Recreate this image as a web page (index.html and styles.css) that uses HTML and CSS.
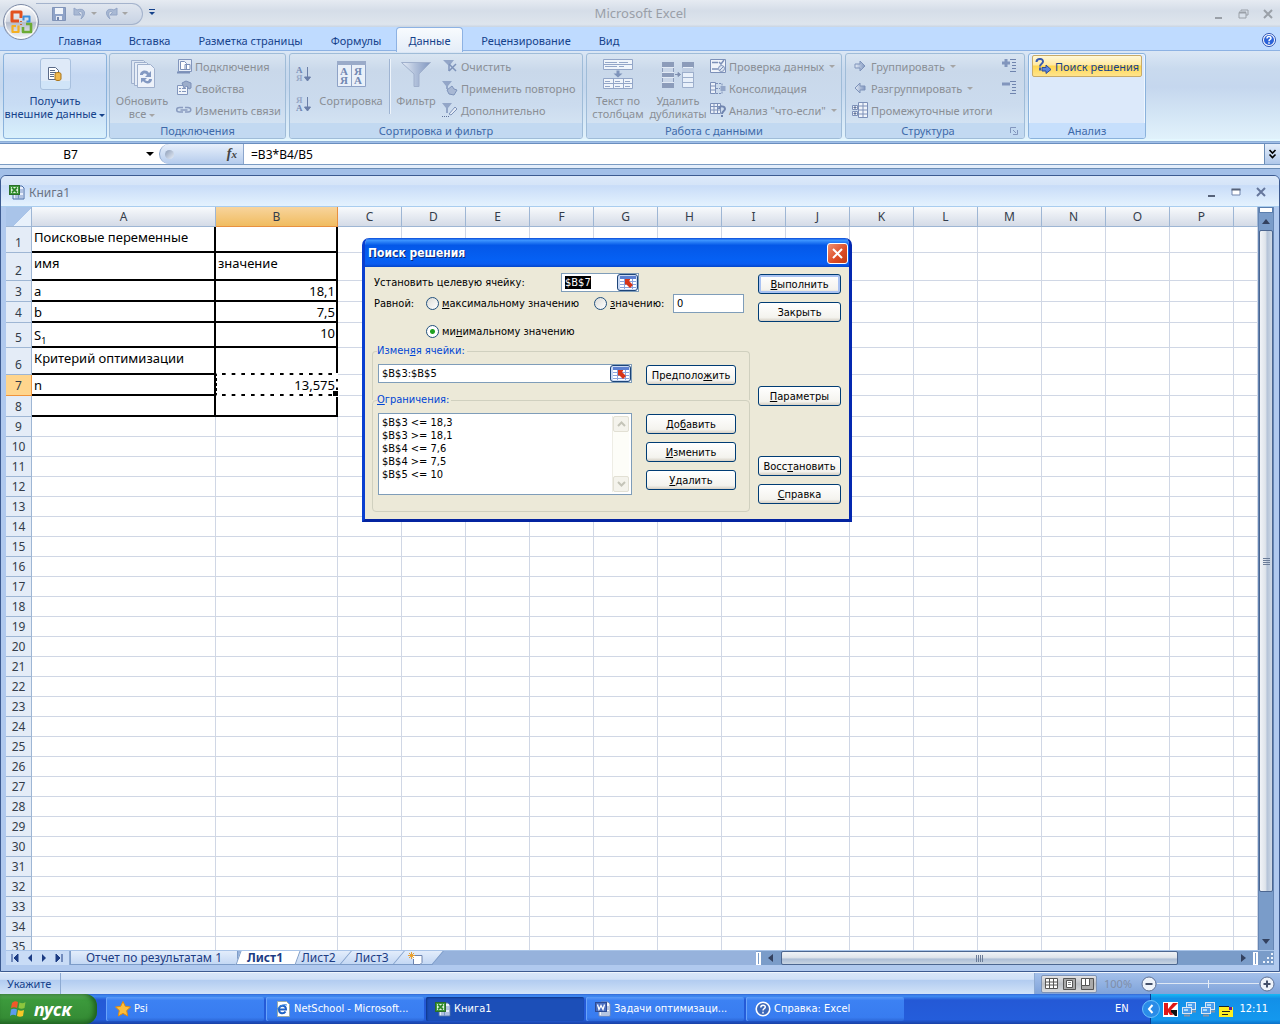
FILE: index.html
```html
<!DOCTYPE html>
<html lang="ru">
<head>
<meta charset="utf-8">
<title>Microsoft Excel - Книга1</title>
<link rel="stylesheet" href="styles.css">
</head>
<body>
<svg class="defs" aria-hidden="true">
  <defs>
    <linearGradient id="steel" x1="0" y1="0" x2="1" y2="0"><stop offset="0" stop-color="#e6edf7"/><stop offset=".45" stop-color="#b4c3dc"/><stop offset="1" stop-color="#8197c0"/></linearGradient>
    <linearGradient id="orb" x1="0" y1="0" x2="0" y2="1"><stop offset="0" stop-color="#fdfdfe"/><stop offset=".48" stop-color="#d3d8e2"/><stop offset=".52" stop-color="#b4bccc"/><stop offset="1" stop-color="#f8fafc"/></linearGradient>
    <symbol id="i-az" viewBox="0 0 16 18"><text x="1" y="8" class="ltr">А</text><text x="1" y="16" class="ltr pale">Я</text><path d="M12.500 2v13M9.500 12l3 4 3-4z" stroke="#6b7fa8" fill="#6b7fa8"/></symbol>
    <symbol id="i-za" viewBox="0 0 16 18"><text x="1" y="8" class="ltr pale">Я</text><text x="1" y="16" class="ltr">А</text><path d="M12.500 2v13M9.500 12l3 4 3-4z" stroke="#6b7fa8" fill="#6b7fa8"/></symbol>
    <symbol id="i-excel" viewBox="0 0 16 16"><path d="M6 2h7l2 2v11H4v-4" fill="#e8eefb" stroke="#4a6ea8"/><path d="M11 6h3M11 8h3M6 12h8M6 14h8M9.500 11v4" stroke="#7a96c8"/><rect x=".5" y="1.500" width="10" height="9" fill="#3f9a3c" stroke="#2a6e2a"/><path d="M2 3h7v6H2z" fill="#e4f2e0"/><path d="M3 3.500l5 5M8 3.500l-5 5" stroke="#2f8a2c" stroke-width="1.800"/></symbol>
    <symbol id="i-ref" viewBox="0 0 16 13"><rect width="16" height="13" fill="#fff"/><path d="M0 0h16v3H0z" fill="#5b7fd0"/><path d="M0 5.500h16M0 8.500h16M0 11.500h16M4.500 3v10M12.500 3v10" stroke="#8aa4dd"/><path d="M5 3h5v1l-1 1 4 4-3 3-4-4-1 1z" fill="#d83418"/></symbol>
    <symbol id="i-net" viewBox="0 0 16 16"><rect x="5.500" y="1.500" width="9" height="7" fill="#4a9cec" stroke="#dfe8f2"/><path d="M7 3h4v2H7z" fill="#a8dcff"/><rect x="1.500" y="6.500" width="9" height="6" fill="#4a9cec" stroke="#dfe8f2"/><path d="M3 8h4v2H3z" fill="#a8dcff"/><path d="M3 14.500h6M11 10.500h4" stroke="#8894a8" stroke-width="2"/></symbol>
  </defs>
</svg>

<header class="titlebar">
  <button class="office" aria-label="Кнопка Office">
    <svg viewBox="0 0 38 38" width="38" height="38"><circle cx="19" cy="19" r="17.500" fill="url(#orb)" stroke="#7c8aa6"/><circle cx="19" cy="19" r="16" fill="none" stroke="#fff"/>
      <g fill="none" stroke-linejoin="round"><path d="M17 18h-7V9h9v6" stroke="#e2501e" stroke-width="3"/><path d="M21.500 17.500v-4h6v5h-3" stroke="#3a8edc" stroke-width="2"/><path d="M16.500 22.500V29H10.500v-6h3.500" stroke="#f4b024" stroke-width="2.200"/><path d="M21 24v5h8v-8h-5" stroke="#6cab34" stroke-width="2.600"/><path d="M18 18.500h2M18 21.500h2" stroke="#c86a3a"/></g></svg>
  </button>
  <div class="qat">
    <button aria-label="Сохранить"><svg viewBox="0 0 14 14" width="14" height="14"><path d="M.5.500h13v13H.5z" fill="#8fa3c8" stroke="#8194b8"/><path d="M3 1h8v6H3z" fill="#f0f4fa"/><path d="M4 9h6v4H4z" fill="#e6ebf5"/><path d="M5 10h2v3H5z" fill="#7285ac"/></svg></button>
    <button aria-label="Отменить"><svg viewBox="0 0 14 14" width="14" height="14"><path d="M1 1v7h7L5.500 5.500C8 3 11 5 8 12c6-5 4-12-4-9z" fill="#a9b9d4" stroke="#93a5c6"/></svg></button>
    <span class="tri"></span>
    <button aria-label="Вернуть"><svg viewBox="0 0 14 14" width="14" height="14"><path d="M13 1v7H6l2.500-2.500C6 3 3 5 6 12-0 7 2 0 10 3z" fill="#a9b9d4" stroke="#93a5c6"/></svg></button>
    <span class="tri"></span>
  </div>
  <button class="qat-more" aria-label="Настройка панели"><span class="tri navy bar"></span></button>
  <h1>Microsoft Excel</h1>
  <div class="winbtns">
    <button aria-label="Свернуть"><svg viewBox="0 0 12 12" width="12" height="12"><path d="M3 9h7v2H3z" fill="#9aa0a8"/></svg></button>
    <button aria-label="Восстановить"><svg viewBox="0 0 12 12" width="12" height="12"><path d="M4 3V2h7v5H9M2 4.500h7V10H2z" fill="none" stroke="#9aa0a8"/><path d="M2 4.500h7" stroke="#9aa0a8" stroke-width="2"/></svg></button>
    <button aria-label="Закрыть"><svg viewBox="0 0 12 12" width="12" height="12"><path d="M2 2l8 8M10 2l-8 8" stroke="#9aa0a8" stroke-width="2"/></svg></button>
  </div>
</header>

<nav class="tabs">
  <button class="t1">Главная</button><button class="t2">Вставка</button><button class="t3">Разметка страницы</button><button class="t4">Формулы</button><button class="t5 active">Данные</button><button class="t6">Рецензирование</button><button class="t7">Вид</button>
  <button class="help" aria-label="Справка"><svg viewBox="0 0 14 14" width="14" height="14"><circle cx="7" cy="7" r="6.500" fill="#fff" stroke="#2a50b0"/><circle cx="7" cy="7" r="5" fill="#2a62d8"/><path d="M5 5.500C5 3 9 3 9 5.200 9 6.500 7 6.500 7 8.200M7 9.300v1.500" fill="none" stroke="#fff" stroke-width="1.500"/></svg></button>
</nav>

<section class="ribbon">
  <div class="group hot g1">
    <div class="items">
      <button class="big"><span class="frame"><svg viewBox="0 0 16 16" width="16" height="16"><path d="M1.500 1.500h7l3 3v9h-10z" fill="#fff" stroke="#5a6a88"/><path d="M3 4.500h5M3 6.500h6M3 8.500h4M3 10.500h4" stroke="#5a6a88"/><path d="M8 8c0-2 6-2 6 0v5c0 2-6 2-6 0z" fill="#f0b84c" stroke="#a8741c"/></svg></span><span>Получить<br>внешние данные <i class="tri navy"></i></span></button>
    </div>
  </div>
  <div class="group g2">
    <div class="items">
      <button class="big"><svg viewBox="0 0 32 32" width="32" height="32"><path d="M5.500 2.500h12l3 3v20h-15z" fill="#dde6f3" stroke="#9fb0cd"/><path d="M8.500 4.500h12l3 3v20h-15z" fill="#e6edf7" stroke="#9fb0cd"/><path d="M11.500 6.500h13l4 4v19h-17z" fill="#edf2fa" stroke="#9fb0cd"/><path d="M14 17c0-5 7-6 9-2l2-2v6h-6l2-2c-1-2-4-2-4 0zM26 21c0 5-6 6-9 2l-2 2v-5h6l-2 2c2 2 4 1 4-1z" fill="#8399c2"/></svg><span>Обновить<br>все <i class="tri"></i></span></button>
      <div class="rows">
        <button><svg viewBox="0 0 16 16" width="16" height="16"><path d="M2.500 1.500h13v12h-13z" fill="#e8eef8" stroke="#8296bd"/><path d="M4.500 3.500h4l2 2v6h-6zM9 6.500h5v5H9z" fill="#fff" stroke="#7c90b8"/><path d="M1 14.500h13" stroke="#7c90b8" stroke-width="2"/></svg>Подключения</button>
        <button><svg viewBox="0 0 16 16" width="16" height="16"><path d="M1.500 5.500h10v9h-10z" fill="#f0f4fa" stroke="#8296bd"/><path d="M3 8.500h2M3 11.500h2M6 8.500h4M6 11.500h4" stroke="#8296bd"/><path d="M6 3l4-2 5 2v5l-2 1-2-3-3 2z" fill="#9cadca" stroke="#7c90b8"/></svg>Свойства</button>
        <button><svg viewBox="0 0 16 16" width="16" height="16"><path d="M7 10H3.500a2.500 2 0 010-4.500H7M9 5.500h3a2.500 2 0 010 4.500H9M4.500 8h7" fill="none" stroke="#8a9cc0" stroke-width="1.500"/></svg>Изменить связи</button>
      </div>
    </div>
    <h2>Подключения</h2>
  </div>
  <div class="group g3">
    <div class="items">
      <div class="pair"><button aria-label="По возрастанию"><svg width="16" height="18"><use href="#i-az"/></svg></button><button aria-label="По убыванию"><svg width="16" height="18"><use href="#i-za"/></svg></button></div>
      <button class="big"><svg viewBox="0 0 32 32" width="32" height="32"><path d="M2.500 3.500h28v25h-28z" fill="#e9f0f9" stroke="#8ea2c6"/><path d="M2 3h29v4H2z" fill="#9aabc9"/><path d="M16.500 7v21" stroke="#8ea2c6"/><g class="ltr big-ltr"><text x="5" y="17">А</text><text x="5" y="26">Я</text><text x="19" y="17">Я</text><text x="19" y="26">А</text></g></svg><span>Сортировка</span></button>
      <span class="sep"></span>
      <button class="big filter"><svg viewBox="0 0 32 32" width="32" height="32"><path d="M1.500 4.500h29L19 16v12.500h-5V16z" fill="url(#steel)" stroke="#a0b0cc"/></svg><span>Фильтр</span></button>
      <div class="rows">
        <button><svg viewBox="0 0 16 16" width="16" height="16"><path d="M1 2h11L8 7v6H6V7z" fill="#93a6c8"/><path d="M7 6l7 7M14 6l-7 7" stroke="#7e93ba" stroke-width="1.500"/></svg>Очистить</button>
        <button><svg viewBox="0 0 16 16" width="16" height="16"><path d="M0 1h10L6 6v3H4V6z" fill="#93a6c8"/><path d="M5 10l5-4 2 3 3 1-3 5-5-1z" fill="#a8b8d4" stroke="#7e93ba"/></svg>Применить повторно</button>
        <button><svg viewBox="0 0 16 16" width="16" height="16"><path d="M0 1h10L6 6v5H4V6z" fill="#93a6c8"/><path d="M7 12l6-7 2 2-6 6z" fill="#e4ebf6" stroke="#7e93ba"/><path d="M0 14.500h8" stroke="#5f739a" stroke-dasharray="1 1"/></svg>Дополнительно</button>
      </div>
    </div>
    <h2>Сортировка и фильтр</h2>
  </div>
  <div class="group g4">
    <div class="items">
      <button class="big"><svg viewBox="0 0 32 32" width="32" height="32"><path d="M1.500 1.500h29v10h-29z" fill="#f0f5fb" stroke="#93a6c8"/><path d="M3 4.500h12M17 4.500h9M3 8.500h12M17 8.500h5M1 6.500h30" stroke="#93a6c8"/><path d="M14.500 12.500h3v3h3l-4.500 4-4.500-4h3z" fill="#7e93ba"/><path d="M1.500 20.500h29v10h-29z" fill="#f0f5fb" stroke="#93a6c8"/><path d="M1 25.500h30M11.500 20v11M21.500 20v11M3 23.500h5M13 23.500h5M23 23.500h5M3 28.500h5M13 28.500h5M23 28.500h5" stroke="#93a6c8"/></svg><span>Текст по<br>столбцам</span></button>
      <button class="big"><svg viewBox="0 0 34 32" width="34" height="32"><path d="M1 4h12v26H1z" fill="#8c9cba"/><path d="M2 10h10v4H2zM2 20h10v4H2z" fill="#c9d6e8"/><path d="M1 9.500h12M1 14.500h12M1 19.500h12M1 24.500h12" stroke="#e2eaf5"/><path d="M14 16.500h5M17 14.500l2.500 2-2.500 2z" stroke="#7f8fb0" fill="#7f8fb0"/><path d="M21.500 4.500h11v25h-11z" fill="#e8f0fa" stroke="#9dafcc"/><path d="M21 4h12v5H21z" fill="#8c9cba"/><path d="M21 10h12v4H21z" fill="#c0cee2"/><path d="M21 14.500h12M21 19.500h12M21 24.500h12" stroke="#9dafcc"/></svg><span>Удалить<br>дубликаты</span></button>
      <div class="rows">
        <button><svg viewBox="0 0 16 16" width="16" height="16"><path d="M.5 1.500h15v13H.5z" fill="#f0f4fa" stroke="#7c90b8"/><path d="M2 4.500h6M2 11h6M9 4l2 2 3-4" fill="none" stroke="#7c90b8" stroke-width="1.500"/><circle cx="11.500" cy="10.500" r="3" fill="#dbe4f2" stroke="#7c90b8"/><path d="M9.500 12.500l4-4" stroke="#7c90b8"/></svg>Проверка данных <i class="tri"></i></button>
        <button><svg viewBox="0 0 16 16" width="16" height="16"><path d="M.5 2.500h5v11h-5zM.5 6h5M.5 10h5" fill="#eaf0f9" stroke="#7c90b8"/><path d="M10.500 6h5v5h-5z" fill="#93a6c8"/><path d="M6 3.500h6v2M6 13.500h6v-2M6 8.500h4" fill="none" stroke="#7c90b8" stroke-dasharray="2 1"/></svg>Консолидация</button>
        <button><svg viewBox="0 0 16 16" width="16" height="16"><path d="M.5 1.500h10v10H.5zM.5 4.500h10M.5 8h10M4 1.500v10M7.500 1.500v10" fill="#eaf0f9" stroke="#7c90b8"/><path d="M9 7c0-4 6-3 6 0 0 2-3 2-3 5M12 13v2" fill="none" stroke="#7085b0" stroke-width="2"/></svg>Анализ "что-если" <i class="tri"></i></button>
      </div>
    </div>
    <h2>Работа с данными</h2>
  </div>
  <div class="group g5">
    <div class="items">
      <div class="rows">
        <button><svg viewBox="0 0 16 16" width="16" height="16"><path d="M3 6h5V3l5 5-5 5v-3H3z" fill="url(#steel)" stroke="#7e93ba"/></svg>Группировать <i class="tri"></i></button>
        <button><svg viewBox="0 0 16 16" width="16" height="16"><path d="M13 6H8V3L3 8l5 5v-3h5z" fill="url(#steel)" stroke="#7e93ba"/></svg>Разгруппировать <i class="tri"></i></button>
        <button><svg viewBox="0 0 16 16" width="16" height="16"><path d="M.5 3.500h5v4h-5zM.5 9.500h5v4h-5zM6.500.500h9v15h-9zM6.500 4h9M6.500 8h9M6.500 12h9M11 .500v15" fill="#f0f4fa" stroke="#7c90b8"/><path d="M1.500 5.500h3M3 4v3M1.500 11.500h3M3 10v3" stroke="#5f739a"/></svg>Промежуточные итоги</button>
      </div>
      <div class="rows outline">
        <button aria-label="Отобразить детали"><svg viewBox="0 0 16 16" width="16" height="16"><path d="M1 5h8M5 1v8" stroke="#8296bd" stroke-width="3"/><path d="M9 1.500h6M11 4.500h4M11 7.500h4M11 10.500h4M9 13.500h6" stroke="#6f84ae"/></svg></button>
        <button aria-label="Скрыть детали"><svg viewBox="0 0 16 16" width="16" height="16"><path d="M1 4h8" stroke="#8296bd" stroke-width="3"/><path d="M9 1.500h6M11 4.500h4M11 7.500h4M11 10.500h4M9 13.500h6" stroke="#6f84ae"/></svg></button>
      </div>
    </div>
    <h2><span>Структура</span><svg viewBox="0 0 8 8" width="8" height="8"><path d="M.5 6V.500H6M3 3l3 3M7.500 3v4.500H3" fill="none" stroke="#8296bd"/></svg></h2>
  </div>
  <div class="group hot g6">
    <div class="items">
      <button class="solver"><svg viewBox="0 0 16 16" width="16" height="16"><path d="M1.500 4C1.500 0 8 0 8 3.500 8 6 5 5.500 5 8.500M5 9.500v3" fill="none" stroke="#3a5cae" stroke-width="2"/><path d="M7 9.500h4V7l5 4.500-5 4V13H7z" fill="#5b86dc" stroke="#2c4c9c"/></svg>Поиск решения</button>
    </div>
    <h2>Анализ</h2>
  </div>
</section>

<div class="formula">
  <div class="namebox"><input value="B7" aria-label="Имя"><button aria-label="Список имён"><i class="tri black"></i></button></div>
  <div class="fx"><span class="knob"></span><button aria-label="Вставить функцию"><em>f</em><small>x</small></button></div>
  <input class="expr" value="=B3*B4/B5" aria-label="Строка формул">
  <button class="expand" aria-label="Развернуть"><svg viewBox="0 0 9 10" width="9" height="10"><path d="M1.500 1l3 3 3-3M1.500 5.500l3 3 3-3" fill="none" stroke="#000" stroke-width="1.600"/></svg></button>
</div>

<main class="workspace">
  <section class="book">
    <div class="book-title">
      <svg width="16" height="16"><use href="#i-excel"/></svg><h2>Книга1</h2>
      <div class="winbtns dark">
        <button aria-label="Свернуть окно"><svg viewBox="0 0 12 12" width="12" height="12"><path d="M3 9h7v2H3z" fill="#566279"/></svg></button>
        <button aria-label="Развернуть окно"><svg viewBox="0 0 12 12" width="12" height="12"><path d="M2 3.500h8V9H2z" fill="#fff" stroke="#7185ac"/><path d="M1.500 3.500h9" stroke="#566279" stroke-width="2"/></svg></button>
        <button aria-label="Закрыть окно"><svg viewBox="0 0 12 12" width="12" height="12"><path d="M2 2l8 8M10 2l-8 8" stroke="#66779c" stroke-width="2"/></svg></button>
      </div>
    </div>
    <div class="sheet-area">
      <div class="sheet"><table id="grid"></table></div>
      <div class="vscroll">
        <span class="splitter"></span><button class="up" aria-label="Вверх"></button>
        <span class="vthumb"><i></i></span>
        <button class="down" aria-label="Вниз"></button>
      </div>
    </div>
    <div class="sheet-tabs">
      <div class="navs">
        <button aria-label="Первый лист"><svg viewBox="0 0 8 8" width="8" height="8"><path d="M1 0v8M7 0L3 4l4 4z" stroke="#1c3c84" fill="#1c3c84"/></svg></button>
        <button aria-label="Предыдущий лист"><svg viewBox="0 0 8 8" width="8" height="8"><path d="M6 0L2 4l4 4z" fill="#1c3c84"/></svg></button>
        <button aria-label="Следующий лист"><svg viewBox="0 0 8 8" width="8" height="8"><path d="M2 0l4 4-4 4z" fill="#1c3c84"/></svg></button>
        <button aria-label="Последний лист"><svg viewBox="0 0 8 8" width="8" height="8"><path d="M7 0v8M1 0l4 4-4 4z" stroke="#1c3c84" fill="#1c3c84"/></svg></button>
      </div>
      <button class="stab report"><span>Отчет по результатам 1</span></button>
      <button class="stab current"><span>Лист1</span></button>
      <button class="stab"><span>Лист2</span></button>
      <button class="stab"><span>Лист3</span></button>
      <button class="stab add" aria-label="Вставить лист"><span><svg viewBox="0 0 15 13" width="15" height="13"><path d="M4 3.500h10v7l-2 2H5.500V7" fill="#fff" stroke="#6b82ae"/><path d="M3.500 0v7M0 3.500h7M1 1l5 5M6 1L1 6" stroke="#e8a030"/></svg></span></button>
      <div class="hscroll">
        <span class="hsplit"></span><button class="left" aria-label="Влево"></button>
        <span class="hthumb"><i></i></span><span class="htrack"></span>
        <button class="right" aria-label="Вправо"></button><span class="hsplit"></span>
        <svg class="grip" viewBox="0 0 12 12" width="12" height="12"><path d="M10 1v2M6 5v2M10 5v2M2 9v2M6 9v2M10 9v2" stroke="#eef4fc" stroke-width="2"/></svg>
      </div>
    </div>
  </section>
</main>

<footer class="status">
  <span class="mode">Укажите</span>
  <div class="views">
    <button aria-label="Обычный"><svg viewBox="0 0 13 11" width="13" height="11"><path d="M.5.500h12v10H.5zM.5 4h12M.5 7h12M4.500.500v10M8.500.500v10" fill="#fff" stroke="#555"/></svg></button>
    <button aria-label="Разметка страницы"><svg viewBox="0 0 13 12" width="13" height="12"><path d="M.5.500h12v11H.5z" fill="#aaa" stroke="#555"/><path d="M3.500 2.500h6v7h-6z" fill="#fff" stroke="#555"/><path d="M5 4.500h3M5 6.500h3" stroke="#888"/></svg></button>
    <button aria-label="Страничный режим"><svg viewBox="0 0 13 12" width="13" height="12"><path d="M.5.500h12v11H.5z" fill="#aaa" stroke="#555"/><path d="M.5.500h4v7h-4zM4.500.500h4v7h-4z" fill="#fff" stroke="#555"/></svg></button>
  </div>
  <span class="zoom">100%</span>
  <button class="round" aria-label="Уменьшить"><svg viewBox="0 0 16 16" width="16" height="16"><circle cx="8" cy="8" r="7" fill="#eef3fa" stroke="#5c6f94"/><path d="M4.500 8h7" stroke="#44506a" stroke-width="2"/></svg></button>
  <span class="slide"></span>
  <button class="round" aria-label="Увеличить"><svg viewBox="0 0 16 16" width="16" height="16"><circle cx="8" cy="8" r="7" fill="#eef3fa" stroke="#5c6f94"/><path d="M4.500 8h7M8 4.500v7" stroke="#44506a" stroke-width="2"/></svg></button>
</footer>

<div class="taskbar">
  <button class="start"><svg viewBox="0 0 18 18" width="18" height="18"><path d="M2 3c2-2 4-2 6-1L7 8C5 7 3 7 1 8z" fill="#f0582a"/><path d="M9.500 2.500c2 1 4 1 6-.500L14.500 8c-2 1-4 1-6 0z" fill="#8cc63e"/><path d="M1 9.500c2-1 4-1 6 0l-1 6c-2-1-4-1-6 .500z" fill="#5c9cf0"/><path d="M8 10c2 1 4 1 6 0l-1 6c-2 1-4 1-6 0z" fill="#f8c828"/></svg>пуск</button>
  <div class="tasks">
    <button><svg viewBox="0 0 16 16" width="16" height="16"><path d="M8 .500l2.300 4.800 5.200.700-3.800 3.600 1 5.400L8 12.400 3.300 15l1-5.400L.5 6l5.200-.700z" fill="#fdbe3c" stroke="#e08a10"/></svg><span>Psi</span></button>
    <button><svg viewBox="0 0 16 16" width="16" height="16"><path d="M2.500.500h9l3 3v12h-12z" fill="#fff" stroke="#9aa"/><path d="M3 8.500h8c0-5-7-5-7 0s5 4.500 6.500 2" fill="none" stroke="#1e62c8" stroke-width="2"/><path d="M1 13C-1 9 7 2 12 4" fill="none" stroke="#3a88e0"/></svg><span>NetSchool - Microsoft...</span></button>
    <button class="on"><svg width="16" height="16"><use href="#i-excel"/></svg><span>Книга1</span></button>
    <button><svg viewBox="0 0 16 16" width="16" height="16"><path d="M6 1h7l2 2v12H4v-4" fill="#f2f5fc" stroke="#7a8cb4"/><path d="M11 6h3M11 8h3M6 11h8M6 13h8" stroke="#7a96c8"/><rect x=".5" y="1.500" width="11" height="9" fill="#4a6ec0" stroke="#2c4a94"/><path d="M2.500 3.500l1.500 5 2-4 2 4 1.500-5" fill="none" stroke="#fff" stroke-width="1.300"/></svg><span>Задачи оптимизаци...</span></button>
    <button><svg viewBox="0 0 16 16" width="16" height="16"><circle cx="8" cy="8" r="6.800" fill="#3d68b8" stroke="#fff" stroke-width="1.600"/><path d="M5.800 6.500c0-3 4.500-3 4.500-.400C10.300 7.800 8 7.600 8 9.500M8 10.800v1.600" fill="none" stroke="#fff" stroke-width="1.500"/></svg><span>Справка: Excel</span></button>
  </div>
  <span class="lang">EN</span>
  <div class="tray">
    <button class="chev" aria-label="Показать значки"><svg viewBox="0 0 18 18" width="18" height="18"><circle cx="9" cy="9" r="8.500" fill="#2a8ce8" stroke="#6cc0fa"/><path d="M10.500 5L7 9l3.500 4" fill="none" stroke="#fff" stroke-width="2"/></svg></button>
    <svg viewBox="0 0 15 15" width="15" height="15"><path d="M0 0h15v15H0z" fill="#fff"/><path d="M1 1h4v6l5-6h5L8 8l2 5H7L5 10v3H1z" fill="#e01818"/><path d="M8 8h6v6h-2l-4-4z" fill="#111"/></svg>
    <svg width="16" height="16"><use href="#i-net"/></svg>
    <svg width="16" height="16"><use href="#i-net"/></svg>
    <svg viewBox="0 0 14 16" width="14" height="16"><path d="M0 6h14v10H0z" fill="#ffee20"/><path d="M0 5.500h10" stroke="#222"/><path d="M3 10.500h8M3 13.500h6" stroke="#222"/><path d="M10 6h3v3h-3z" fill="#6a1c90"/></svg>
    <time>12:11</time>
  </div>
</div>

<form class="dialog" role="dialog" aria-labelledby="dlg-title">
  <div class="dlg-bar"><h2 id="dlg-title">Поиск решения</h2><button type="button" class="dlg-close" aria-label="Закрыть"><svg viewBox="0 0 13 13" width="13" height="13"><path d="M2 2l9 9M11 2l-9 9" stroke="#fff" stroke-width="2"/></svg></button></div>
  <div class="dlg-body">
    <div class="dlg-main">
      <div class="target"><label for="target">Установить целевую ячейку:</label><span class="ref"><input id="target" value="$B$7"><button type="button" aria-label="Выбрать"><svg width="16" height="13"><use href="#i-ref"/></svg></button></span></div>
      <div class="equal">
        <span>Равной:</span>
        <label><input type="radio" name="goal"><span><u>м</u>аксимальному значению</span></label>
        <label><input type="radio" name="goal"><span><u>з</u>начению:</span></label>
        <input class="val" value="0" aria-label="Значение">
        <label class="min"><input type="radio" name="goal" checked><span>ми<u>н</u>имальному значению</span></label>
      </div>
      <fieldset class="fs1">
        <legend>Измен<u>я</u>я ячейки:</legend>
        <div class="cols"><span class="ref wide"><input value="$B$3:$B$5" aria-label="Изменяя ячейки"><button type="button" aria-label="Выбрать"><svg width="16" height="13"><use href="#i-ref"/></svg></button></span><button type="button" class="xp">Предполо<u>ж</u>ить</button></div>
      </fieldset>
      <fieldset class="fs2">
        <legend><u>О</u>граничения:</legend>
        <div class="cols">
          <div class="list"><select size="6" aria-label="Ограничения"><option>$B$3 &lt;= 18,3</option><option>$B$3 &gt;= 18,1</option><option>$B$4 &lt;= 7,6</option><option>$B$4 &gt;= 7,5</option><option>$B$5 &lt;= 10</option></select>
            <div class="lscroll"><span><svg viewBox="0 0 9 6" width="9" height="6"><path d="M1 5l3.500-3.500L8 5" fill="none" stroke="#c4c4b8" stroke-width="2"/></svg></span><span><svg viewBox="0 0 9 6" width="9" height="6"><path d="M1 1l3.500 3.500L8 1" fill="none" stroke="#c4c4b8" stroke-width="2"/></svg></span></div></div>
          <div class="stack"><button type="button" class="xp">До<u>б</u>авить</button><button type="button" class="xp"><u>И</u>зменить</button><button type="button" class="xp"><u>У</u>далить</button></div>
        </div>
      </fieldset>
    </div>
    <div class="dlg-side">
      <button type="button" class="xp default"><u>В</u>ыполнить</button>
      <button type="button" class="xp">Закрыть</button>
      <button type="button" class="xp params"><u>П</u>араметры</button>
      <button type="button" class="xp reset">Восс<u>т</u>ановить</button>
      <button type="button" class="xp"><u>С</u>правка</button>
    </div>
  </div>
</form>
<script src="script.js"></script>
</body>
</html>
```
FILE: script.js
```js
const cells = {
  A1: 'Поисковые переменные', A2: 'имя', B2: 'значение',
  A3: 'a', B3: '18,1', A4: 'b', B4: '7,5',
  A5: 'S<sub>1</sub>', B5: '10', A6: 'Критерий оптимизации',
  A7: 'n', B7: '13,575'
};
const columns = [...'ABCDEFGHIJKLMNOP', ''];
const lastRow = 35;
const framedRows = 8;

let html = '<colgroup><col class="c-head"><col class="c-a"><col class="c-b">' +
  '<col class="c-std">'.repeat(14) + '<col></colgroup><thead><tr><th class="corner"></th>';
for (const c of columns) {
  html += `<th class="${c === 'B' ? 'sel' : ''}">${c}</th>`;
}
html += '</tr></thead><tbody>';
for (let r = 1; r <= lastRow; r++) {
  html += `<tr class="r${r}"><th class="${r === 7 ? 'sel' : ''}">${r}</th>`;
  for (const c of columns) {
    const text = cells[c + r] || '';
    const cls = [];
    if (r <= framedRows && (c === 'A' || c === 'B')) cls.push('framed');
    if (/^[0-9]/.test(text)) cls.push('num');
    if (c + r === 'B7') cls.push('marching');
    html += `<td class="${cls.join(' ')}">${text}</td>`;
  }
  html += '</tr>';
}
document.getElementById('grid').innerHTML = html + '</tbody>';

const target = document.getElementById('target');
target.focus();
target.select();
```
FILE: styles.css
```css
* { box-sizing: border-box; }
body {
  margin: 0; height: 100vh; display: flex; flex-direction: column; overflow: hidden;
  font: 11px/13px "Noto Sans", "Open Sans", sans-serif; color: #15428b; background: #a2bfe8;
}
button, input, select { font: inherit; color: inherit; margin: 0; padding: 0; border: 0; background: none; outline: none; }
h1, h2 { margin: 0; font: inherit; }
svg { display: block; flex: none; }
.defs { position: absolute; width: 0; height: 0; }
.tri { display: inline-block; border: 3px solid transparent; border-top-color: #a5a5a5; border-bottom: 0; vertical-align: middle; }
.tri.navy { border-top-color: #15428b; }
.tri.black { border-width: 4px; border-bottom: 0; border-top-color: #000; }
.ltr { font: bold 9px "Liberation Serif", serif; fill: #7187b2; }
.ltr.pale { fill: #98a8c6; }
.big-ltr { font-size: 11px; }

/* title bar */
.titlebar { position: relative; flex: none; height: 27px; display: flex; align-items: center; background: linear-gradient(#e6ebf2, #d5dde8 40%, #dee5ed 90%, #c9d4e2); }
.office { position: absolute; left: 2px; top: 3px; z-index: 3; }
.qat { display: flex; align-items: center; gap: 7px; height: 22px; margin-left: 36px; width: 107px; padding-left: 16px; border: 1px solid #a4b3cc; border-left: 0; border-radius: 0 11px 11px 0; background: linear-gradient(#e0e6ef, #c8d3e4); }
.qat .tri { margin-left: -3px; }
.qat-more { margin-left: 6px; line-height: 0; }
.tri.bar { border-top-color: #15428b; position: relative; }
.tri.bar::before { content: ""; position: absolute; left: -3px; top: -6px; width: 6px; height: 1px; background: #15428b; }
.titlebar h1 { flex: 1; text-align: center; color: #9a9fa8; padding-right: 86px; font-size: 13px; }
.winbtns { display: flex; gap: 13px; padding-right: 6px; }

/* ribbon tabs */
.tabs { position: relative; flex: none; height: 24px; display: flex; padding-left: 45px; background: #bfdbff; border-bottom: 1px solid #8db2e3; }
.tabs button { height: 25px; padding-top: 1px; white-space: nowrap; }
.t1 { width: 70px; } .t2 { width: 69px; } .t3 { width: 133px; } .t4 { width: 78px; } .t5 { width: 67px; } .t6 { width: 128px; } .t7 { width: 38px; }
.tabs .active { border: 1px solid #8db2e3; border-bottom: 0; border-radius: 4px 4px 0 0; background: linear-gradient(#f8fbfe, #e4edf8); margin: 0 -1px 0 1px; }
.tabs .help { margin-left: auto; padding-right: 4px; }

/* ribbon */
.ribbon { flex: none; height: 91px; display: flex; gap: 3px; padding: 2px 3px; border-bottom: 1px solid #8fb0d8; background: linear-gradient(#dbe7f5, #c9daee 20%, #c5d7ee 40%, #e2f3fc); box-shadow: inset 0 -2px #e4f8ff; }
.group { display: flex; flex-direction: column; border: 1px solid #9fbcd8; border-radius: 3px; height: 86px; background: linear-gradient(#d9e5f2, #c9d8ea 20%, #cbdbee 60%, #d9e8f5); color: #8a8f96; overflow: hidden; }
.hot { color: #15428b; border-color: #8ab2dc; }
.g1 { width: 104px; background: linear-gradient(#dce8f8, #c5d8f2 25%, #c8dcf4 60%, #d8f0fc); }
.g2 { width: 177px; margin-left: -1px; } .g3 { width: 294px; } .g4 { width: 256px; } .g5 { width: 180px; } .g6 { width: 118px; }
.g6 { background: #dce9fa; box-shadow: inset 0 0 0 1px #eef6ff; }
.group h2 { flex: none; height: 15px; line-height: 15px; text-align: center; color: #3e6aaa; background: #c2d9f1; }
.g6 h2 { background: #c6dffc; }
.g5 h2 { display: flex; align-items: center; padding-right: 6px; }
.g5 h2 span { flex: 1; }
.items { flex: 1; display: flex; align-items: flex-start; padding: 1px 2px; white-space: nowrap; }
.big { display: flex; flex-direction: column; align-items: center; gap: 4px; padding-top: 3px; line-height: 13px; }
.g1 .big { width: 98px; }
.frame { display: grid; place-items: center; width: 31px; height: 32px; border: 1px solid #a8c0de; border-radius: 3px; background: linear-gradient(#dfeaf8 75%, #d0e4f8 75%); }
.rows { display: flex; flex-direction: column; }
.rows button { display: flex; align-items: center; gap: 3px; height: 22px; }
.g2 .big { width: 60px; } .g2 .rows { padding-left: 4px; }
.pair { padding-left: 3px; padding-top: 10px; display: flex; flex-direction: column; gap: 12px; width: 24px; }
.g3 .big { width: 70px; } .g3 .filter { width: 48px; } .g3 .rows { padding-left: 2px; }
.sep { width: 2px; height: 55px; margin: 4px 1px 0 3px; border-left: 1px solid #9fb4d2; background: #eef4fb; }
.g4 .big { width: 58px; } .g4 .big + .big { width: 62px; } .g4 .rows { padding-left: 1px; }
.g5 .rows { padding-left: 4px; } .g5 .outline { margin-left: auto; padding-right: 5px; }
.rows .tri { margin-left: 2px; }
.solver { display: flex; align-items: center; gap: 4px; width: 110px; height: 22px; margin-left: 1px; padding-left: 2px; border: 1px solid #c8ab68; border-radius: 2px; background: linear-gradient(#fff8d8, #ffe9a0 45%, #ffd64e 50%, #ffe48c); }

/* formula bar */
.formula { flex: none; height: 26px; display: flex; margin-top: 1px; background: #fff; border-top: 1px solid #6a8fbf; border-bottom: 1px solid #6a8cb5; box-shadow: inset 0 -3px #e4eefb, inset 0 -4px #7b9cc4; padding-bottom: 4px; color: #000; font-size: 12px; }
.namebox { display: flex; width: 159px; }
.namebox input { width: 141px; text-align: center; }
.namebox button { flex: 1; line-height: 0; }
.fx { width: 85px; display: flex; justify-content: space-between; align-items: center; border: 1px solid #8ba5cc; border-width: 0 1px; border-radius: 10px 0 0 10px; background: linear-gradient(#e8f0fb, #b4cbec); padding: 0 6px 0 5px; color: #444; }
.knob { width: 9px; height: 9px; border-radius: 50%; background: linear-gradient(135deg, #8c9db8, #e8eef8); }
.fx em { font: italic bold 14px "Liberation Serif", serif; } .fx small { font: italic bold 11px "Liberation Serif", serif; }
.expr { flex: 1; padding-left: 7px; }
.expand { display: grid; place-items: center; width: 16px; background: linear-gradient(#e4eefb, #b0c8ea); border-left: 1px solid #6a8cb5; }

/* workbook */
.workspace { flex: 1; min-height: 0; display: flex; padding-top: 6px; background: #a2bfe8; }
.book { flex: 1; min-width: 0; display: flex; flex-direction: column; border: 1px solid #3c5a90; border-radius: 6px 6px 0 0; padding: 0 5px 6px; background: #b0c9ee; overflow: hidden; }
.book-title { flex: none; display: flex; align-items: center; gap: 4px; height: 31px; margin: 0 -5px; padding: 2px 8px 0; border-bottom: 1px solid #a9cdef; background: linear-gradient(#dce9fa, #d5e4f8 30%, #c8dcf8 32%, #e4f2fe); }
.book-title h2 { flex: 1; color: #6a7384; font-size: 12px; }
.book-title .winbtns { padding-right: 4px; }
.sheet-area { flex: 1; min-height: 0; display: flex; }
.sheet { flex: 1; overflow: hidden; background: #fff; }
table { width: 100%; table-layout: fixed; border-collapse: separate; border-spacing: 0; font-size: 13px; line-height: 16px; color: #000; }
.c-head { width: 26px; } .c-a { width: 184px; } .c-b { width: 122px; } .c-std { width: 64px; }
th { height: 20px; padding: 0; font-weight: normal; font-size: 12px; color: #333c4a; }
thead th { background: linear-gradient(#f8fafc, #d4dbe7); border-right: 1px solid #9eb6d4; border-bottom: 1px solid #9eb6d4; }
tbody th { background: #e4ecf7; border-right: 1px solid #9eb6d4; border-bottom: 1px solid #9eb6d4; vertical-align: bottom; line-height: 18px; }
th.corner { background: linear-gradient(135deg, #a9c4e9 60%, #e8f1fb 60%); }
thead th.sel { background: linear-gradient(#f8d49c, #f0bc60); border-color: #e89040; }
tbody th.sel { background: #ffd58d; border-color: #f0943c; }
td { padding: 0 1px 0 2px; vertical-align: top; white-space: nowrap; border-right: 1px solid #d0d7e5; border-bottom: 1px solid #d0d7e5; position: relative; }
td.framed { border-right: 2px solid #000; border-bottom: 2px solid #000; padding-top: 2px; }
.num { text-align: right; }
sub { font-size: 9px; line-height: 0; vertical-align: -4px; }
.r1 th { height: 26px; } .r2 th { height: 28px; } .r3 th, .r4 th, .r7 th, .r8 th { height: 21px; } .r5 th { height: 25px; } .r6 th { height: 27px; }
.r5 td:nth-child(2) { padding-top: 4px; }
td.marching::after { content: ""; position: absolute; inset: -2px -2px -2px 0; border: 2px dashed #fff; border-left: 1px dashed #000; }
td.marching::before { content: ""; position: absolute; right: -3px; bottom: -3px; width: 5px; height: 5px; background: #000; border: 1px solid #fff; z-index: 1; }

/* scroll bars */
.vscroll { flex: none; width: 16px; display: flex; flex-direction: column; align-items: center; background: #7a9cc9; border: 1px solid #6485b4; border-width: 0 1px; }
.splitter { width: 14px; height: 6px; background: #fff; border: 1px solid #5c7fae; }
.vscroll button { width: 0; height: 0; border: 4px solid transparent; }
.vscroll .up { border-bottom: 5px solid #33415f; border-top: 0; margin: 6px 0; }
.vscroll .down { border-top: 5px solid #33415f; border-bottom: 0; margin: 5px 0 6px; }
.vthumb { flex: 1; width: 14px; margin-bottom: 42px; border: 1px solid #4c6690; border-radius: 2px; background: linear-gradient(90deg, #f0f3f7, #dfe4eb 45%, #b4c3d8 60%, #d0dae6); display: grid; place-items: center; }
.vthumb i { width: 7px; height: 7px; background: repeating-linear-gradient(#6b7c98 0 1px, transparent 1px 2px); }
.sheet-tabs { flex: none; display: flex; height: 15px; background: #96b2dc; border-top: 1px solid #a9c4e8; }
.navs { width: 64px; display: flex; align-items: center; justify-content: space-between; padding: 0 6px 0 5px; background: #c9dcf6; border-right: 1px solid #8ca8d0; }
.stab { position: relative; z-index: 0; width: 53px; font-size: 12px; line-height: 14px; color: #1c3c84; }
.stab::before { content: ""; position: absolute; z-index: -1; inset: 0 -6px 0 0; background: linear-gradient(#e3edfb, #c4d8f4); border: 1px solid #7d9cc8; border-width: 0 1px 1px; transform: skewX(-40deg); }
.stab.report { width: 168px; } .stab.report::before { inset: 0; transform: none; }
.stab.current { width: 54px; font-weight: bold; z-index: 1; } .stab.current::before { background: #fff; transform: skewX(-20deg); }
.stab.add { width: 34px; } .stab.add span { display: grid; place-items: center; }
.hscroll { margin-left: auto; width: 518px; display: flex; align-items: center; background: #7a9cc9; }
.hsplit { width: 5px; height: 13px; background: #7a9cc9; border: 1px solid #fff; border-width: 1px 2px; }
.hscroll button { border: 4px solid transparent; }
.hscroll .left { border-right: 5px solid #33415f; border-left: 0; margin: 0 8px 0 7px; }
.hthumb { flex: 1; height: 14px; border: 1px solid #4c6690; border-radius: 2px; background: linear-gradient(#f0f3f7, #dfe4eb 45%, #aebfd6 60%, #c8d4e2); display: grid; place-items: center; }
.hthumb i { width: 7px; height: 7px; background: repeating-linear-gradient(90deg, #6b7c98 0 1px, transparent 1px 2px); }
.htrack { width: 63px; }
.hscroll .right { border-left: 5px solid #33415f; border-right: 0; margin-right: 7px; }
.grip { margin: 0 0 0 4px; }

/* status bar */
.status { flex: none; height: 22px; display: flex; align-items: center; background: linear-gradient(#a4c0ea, #7fa3da); border-top: 1px solid #f0f6fd; }
.mode { flex: 1; padding-left: 7px; position: relative; line-height: 21px; border-right: 1px solid #8daad2; background: linear-gradient(#d8e6f9, #cfe0f7 30%, #b2ccf0 35%, #d2e3f8); }
.mode::after { content: ""; position: absolute; left: 60px; top: 0; width: 1px; height: 21px; background: #8daad2; }
.status .views { display: flex; height: 18px; margin-left: 6px; border: 1px solid #7d92b4; background: linear-gradient(#e4e4e6, #bcc0c6 50%, #d8dadc); border-radius: 2px; }
.views button { width: 18px; display: grid; place-items: center; }
.zoom { width: 44px; padding-left: 7px; color: #7f8ea8; }
.slide { width: 102px; height: 8px; background: linear-gradient(#e8eff8, #e8eff8) center / 1px 8px no-repeat, linear-gradient(#dfe8f4, #dfe8f4) center / 100% 1px no-repeat; }
.status .round:last-child { margin-right: 5px; }

/* task bar */
.taskbar { flex: none; height: 30px; display: flex; align-items: stretch; background: linear-gradient(#3168d5, #3f8cf3 7%, #2459d6 20%, #245ddb 85%, #1941a5); color: #fff; font: 11px/14px "DejaVu Sans Condensed", "Noto Sans", sans-serif; }
.start { width: 97px; display: flex; align-items: center; gap: 6px; padding: 0 0 1px 10px; border-radius: 0 12px 12px 0; background: linear-gradient(#5fad5f, #3c9a3c 20%, #358c35 80%, #27702a); font: italic bold 18px/22px "Noto Sans", sans-serif; box-shadow: inset -3px 0 5px #1e5e1e; }
.tasks { flex: 1; min-width: 0; display: flex; gap: 2px; padding: 3px 0 3px 9px; }
.tasks button { flex: 0 1 158px; min-width: 0; display: flex; align-items: center; gap: 3px; padding-left: 9px; border-radius: 2px; background: linear-gradient(#5a9bf8, #3c81f3 15%, #387cf0 85%, #2c68d8); box-shadow: inset 1px 0 #6aa4fa; }
.tasks .on { background: #1c4fb8; box-shadow: inset 1px 1px 2px #0e3688; }
.tasks span { overflow: hidden; white-space: nowrap; }
.lang { align-self: center; width: 35px; height: 16px; line-height: 16px; }
.tray { display: flex; align-items: center; gap: 3px; width: 138px; margin-left: -8px; padding-right: 12px; position: relative; z-index: 0; }
.tray::before { content: ""; position: absolute; inset: 0 0 0 8px; z-index: -1; background: linear-gradient(#18b8f4, #1290e8 15%, #1498ee 85%, #0c70c8); border-left: 1px solid #0a3c94; }
.tray time { margin-left: auto; }

/* solver dialog */
.dialog { position: absolute; left: 362px; top: 238px; z-index: 10; width: 490px; height: 284px; border: 3px solid #0a3fd0; border-right-color: #0428b0; border-bottom-color: #0424a0; border-top: 0; border-radius: 7px 7px 0 0; background: #ece9d8; color: #000; font: 11px/13px "DejaVu Sans Condensed", "Noto Sans", sans-serif; overflow: hidden; }
.dlg-bar { display: flex; align-items: center; justify-content: space-between; height: 29px; margin: 0 -3px; padding: 2px 4px 0 6px; background: linear-gradient(#0a4ad8, #3d95ff 8%, #0458e8 25%, #0560f4 75%, #0a5cf0 90%, #0244c8); color: #fff; font-weight: bold; font-size: 12px; text-shadow: 1px 1px #0a2878; }
.dlg-close { width: 21px; height: 21px; display: grid; place-items: center; border: 1px solid #fff; border-radius: 3px; background: linear-gradient(135deg, #f09070, #dc4a24 60%, #c03c14); }
.dlg-body { display: grid; grid-template-columns: 1fr 83px; gap: 8px; padding: 6px 8px 0 7px; }
.target { display: flex; align-items: center; justify-content: space-between; padding: 0 111px 0 2px; white-space: nowrap; }
.ref { display: flex; width: 78px; height: 19px; border: 1px solid #7f9db9; background: #fff; }
.ref input { flex: 1; min-width: 0; padding-left: 3px; }
.ref input::selection { background: #000; color: #fff; }
.ref button { width: 21px; display: grid; place-items: center; margin: 0; border: 1px solid #1c4478; border-radius: 3px; background: #c8d8f4; }
.ref.wide { width: 254px; }
.equal { display: grid; grid-template-columns: 54px 168px 79px 71px; grid-template-rows: 19px 28px; align-items: center; padding-top: 2px; white-space: nowrap; height: 70px; align-content: start; row-gap: 4px; }
.equal > span { padding-left: 2px; }
.equal label { display: flex; align-items: center; gap: 3px; }
.equal .min { grid-column: 2; }
.val { width: 71px; height: 19px; border: 1px solid #7f9db9; background: #fff; padding-left: 3px; }
input[type=radio] { appearance: none; width: 13px; height: 13px; border: 1px solid #21507e; border-radius: 50%; background: linear-gradient(135deg, #dcdcd7, #fff); }
input[type=radio]:checked { background: radial-gradient(#21a121 0 2px, #fff 3px); }
fieldset { min-width: 0; margin: 0; padding: 0 0 0 5px; border: 1px solid #d0d0bf; border-radius: 4px; }
legend { padding: 0 2px 0 0; margin-left: -1px; line-height: 14px; color: #0046d5; }
.fs1 { height: 56px; margin-top: -18px; border-bottom: 0; padding-top: 6px; border-radius: 4px 4px 0 0; }
.fs2 { height: 119px; margin-top: -7px; padding-top: 6px; }
.cols { display: flex; gap: 14px; align-items: flex-start; }
.xp { display: block; width: 90px; height: 20px; border: 1px solid #003c74; border-radius: 3px; background: linear-gradient(#fff, #f4f3ee 80%, #d6d0c5); white-space: nowrap; }
.cols > .xp { margin-top: 1px; }
.dlg-side .xp { width: 83px; margin-bottom: 8px; }
.dlg-side { padding-top: 1px; }
.xp.default { box-shadow: inset 0 0 0 2px #a9c2f2; }
.dlg-side .params { margin-top: 64px; } .dlg-side .reset { margin-top: 50px; }
.list { display: flex; width: 254px; height: 82px; border: 1px solid #7f9db9; background: #fff; padding: 2px; }
.list select { flex: 1; height: 78px; overflow: hidden; }
.list option { min-height: 13px; padding: 0 1px; }
.lscroll { width: 17px; display: flex; flex-direction: column; justify-content: space-between; background: #fdfdf8; border-left: 1px solid #eeede5; }
.lscroll span { height: 16px; display: grid; place-items: center; border: 1px solid #e2e0d4; border-radius: 2px; background: #f4f3ec; }
.stack { display: flex; flex-direction: column; gap: 8px; padding-top: 1px; }
```
